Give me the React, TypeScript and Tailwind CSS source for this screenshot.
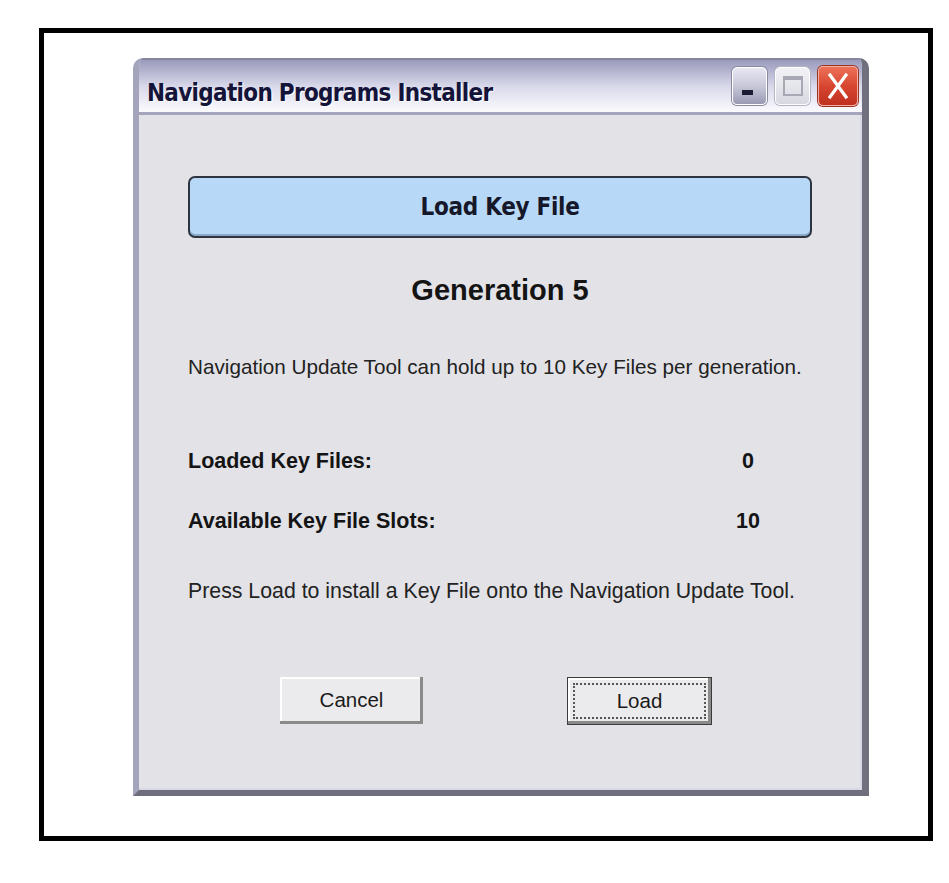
import React from "react";

const titleFont = {
  fontFamily: '"Liberation Sans Narrow", "DejaVu Sans Condensed", "Liberation Sans", sans-serif',
};

function MinimizeButton() {
  return (
    <div className="w-[35px] h-[38px] rounded-[5px] border border-white bg-gradient-to-b from-[#e8e8f2] via-[#c8c8da] to-[#9a9ab4] shadow-[0_0_0_1px_#8a8aa4] flex items-end justify-start pl-[9px] pb-[9px]">
      <div className="w-[11px] h-[5px] bg-[#1c1c34]" />
    </div>
  );
}

function MaximizeButton() {
  return (
    <div className="w-[35px] h-[38px] rounded-[5px] border border-white bg-gradient-to-b from-[#f2f2f6] to-[#d8d8e2] shadow-[0_0_0_1px_#b4b4c4] flex items-center justify-center">
      <div className="w-[20px] h-[20px] border-2 border-[#a8a8b4] border-t-[4px]" />
    </div>
  );
}

function CloseButton() {
  return (
    <div className="w-[40px] h-[40px] rounded-[5px] border border-[#f0b0a0] bg-gradient-to-b from-[#ec7058] via-[#d84630] to-[#c03020] shadow-[0_0_0_1px_#a03020] flex items-center justify-center">
      <svg width="24" height="28" viewBox="0 0 24 28">
        <path d="M4 3 L20 25 M20 3 L4 25" stroke="#ffffff" strokeWidth="3.2" strokeLinecap="square" />
      </svg>
    </div>
  );
}

function XpButton({ label, focused }: { label: string; focused?: boolean }) {
  return (
    <div
      className={
        focused
          ? "w-[145px] h-[48px] bg-[#ebebed] border border-[#3c3c3c] shadow-[inset_-3px_-3px_0_#8a8a8a,inset_2px_2px_0_#ffffff] p-[5px]"
          : "w-[143px] h-[47px] bg-[#ebebed] shadow-[inset_-3px_-3px_0_#8a8a8a,inset_2px_2px_0_#ffffff] p-[5px]"
      }
    >
      <div
        className={
          focused
            ? "w-full h-full border-2 border-dotted border-[#555] flex items-center justify-center"
            : "w-full h-full flex items-center justify-center"
        }
      >
        <span className="text-[20.5px] text-[#1a1a1a] font-['Liberation_Sans',Arial,sans-serif]">{label}</span>
      </div>
    </div>
  );
}

export default function App() {
  return (
    <div className="min-h-[883px] w-[949px] bg-white pt-[28px] pl-[39px]">
      <div className="w-[894px] h-[813px] border-[5px] border-black pt-[25px] pl-[89px]">
        {/* Window */}
        <div className="w-[736px] h-[738px] flex flex-col rounded-t-[10px] overflow-hidden bg-[#e2e2e7] border-l-[6px] border-l-[#a4a4bc] border-r-[7px] border-r-[#70707e] border-b-[6px] border-b-[#6e6e7c] shadow-[inset_-2px_-2px_0_#d8d8e6]">
          {/* Title bar */}
          <div className="h-[57px] shrink-0 flex items-center justify-between pl-[8px] pr-[4px] bg-gradient-to-b from-[#9a9abc] via-[#d8d8ea] to-[#fbfbfe] border-t-2 border-t-[#8686a0] border-b-[3px] border-b-[#a4a4bc]">
            <span
              style={titleFont}
              className="mt-[14px] text-[24px] font-bold text-[#14143a] [text-shadow:1px_1px_0_#ffffff] tracking-[-0.7px]"
            >
              Navigation Programs Installer
            </span>
            <div className="flex items-center gap-[8px]">
              <MinimizeButton />
              <MaximizeButton />
              <CloseButton />
            </div>
          </div>

          {/* Content */}
          <div className="flex-1 pt-[61px] pl-[49px] font-['Liberation_Sans',Arial,sans-serif] text-[#141414]">
            <div className="w-[624px] h-[62px] rounded-[7px] border-2 border-[#2e3440] bg-[#b8d8f8] shadow-[inset_0_-2px_0_#8aa8c8] flex items-center justify-center">
              <span style={titleFont} className="text-[24px] font-bold text-[#16182a] tracking-[-0.3px]">
                Load Key File
              </span>
            </div>

            <div className="w-[624px] mt-[38px] leading-[28px] text-center text-[29px] font-bold">
              Generation 5
            </div>

            <div className="mt-[51px] leading-[24px] text-[20.7px] text-[#222]">
              Navigation Update Tool can hold up to 10 Key Files per generation.
            </div>

            <div className="mt-[70px] leading-[24px] flex text-[21.5px] font-bold">
              <span className="w-[540px]">Loaded Key Files:</span>
              <span className="w-[40px] text-center">0</span>
            </div>

            <div className="mt-[36px] leading-[24px] flex text-[21.5px] font-bold">
              <span className="w-[540px]">Available Key File Slots:</span>
              <span className="w-[40px] text-center">10</span>
            </div>

            <div className="mt-[46px] leading-[24px] text-[21.3px] text-[#222]">
              Press Load to install a Key File onto the Navigation Update Tool.
            </div>

            <div className="mt-[74px] flex items-start pl-[92px] gap-[144px]">
              <XpButton label="Cancel" />
              <XpButton label="Load" focused />
            </div>
          </div>
        </div>
      </div>
    </div>
  );
}
